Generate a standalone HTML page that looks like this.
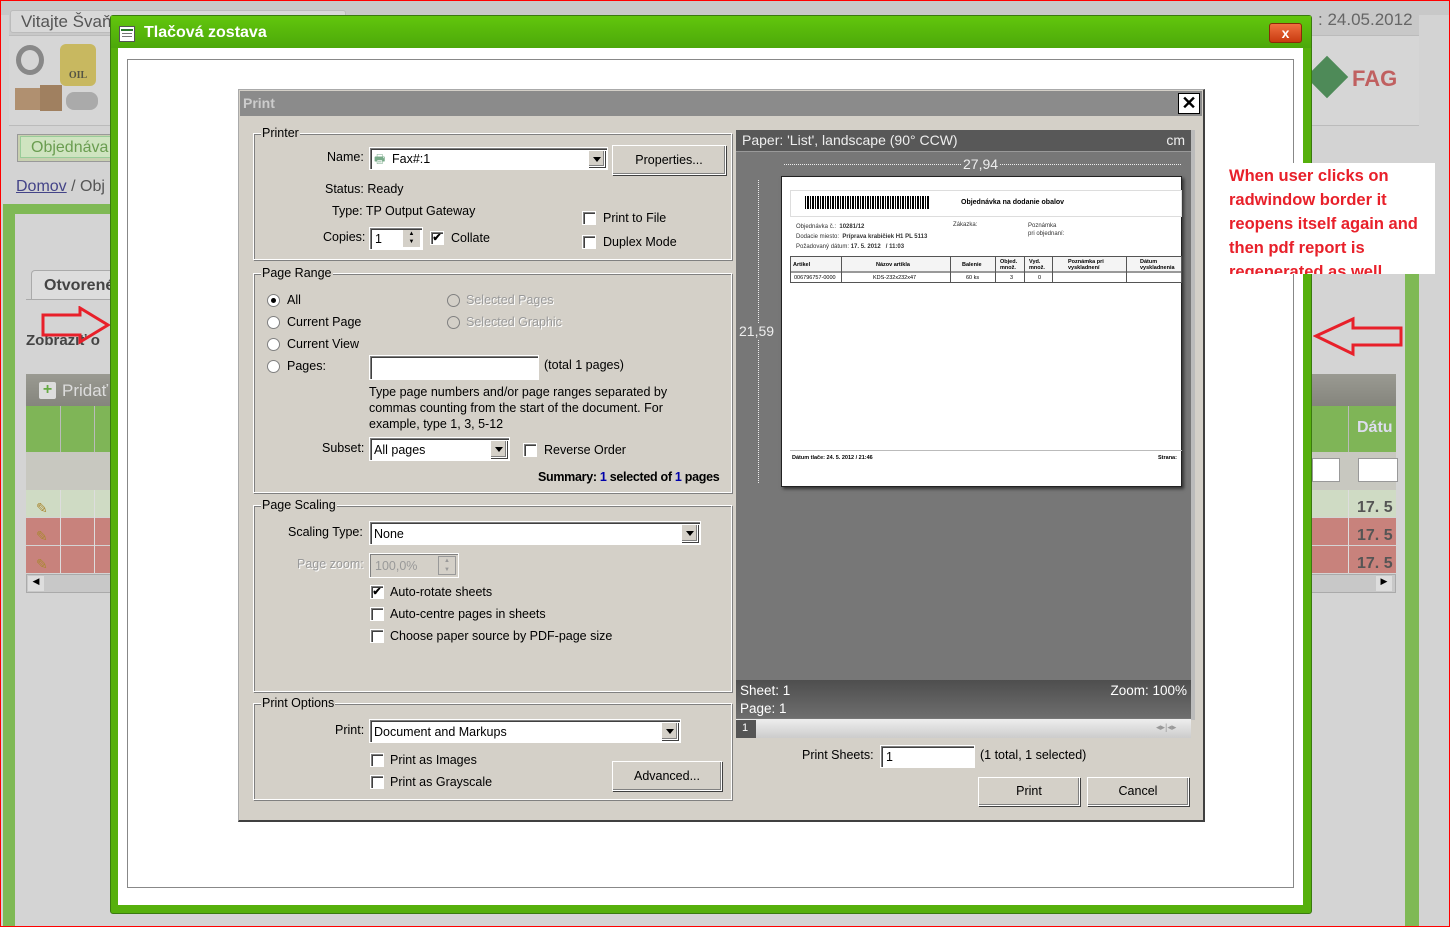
<!DOCTYPE html>
<html><head><meta charset="utf-8">
<style>
*{margin:0;padding:0;box-sizing:border-box}
body{width:1450px;height:927px;overflow:hidden;background:#d3d3d3;font-family:"Liberation Sans",sans-serif;position:relative}
.a{position:absolute}
.t{position:absolute;font-size:12.5px;color:#000;white-space:nowrap}
.fs{position:absolute;border:1px solid #fff;box-shadow:inset 1px 1px 0 #808080, 1px 1px 0 #808080}
.lg{position:absolute;top:-8px;left:7px;background:#d4d0c8;padding:0 1px;font-size:12.5px}
.in{position:absolute;background:#fff;border:1px solid #fff;box-shadow:inset 1px 1px 0 #808080,inset 2px 2px 0 #404040}
.cb{position:absolute;width:14px;height:14px;background:#fff;border:1px solid #fff;box-shadow:inset 1px 1px 0 #808080,inset 2px 2px 0 #404040;font-size:11px;line-height:13px;text-align:center;font-weight:bold}
.rb{position:absolute;width:13px;height:13px;border-radius:50%;background:#fff;border:1px solid #808080}
.rb.on::after{content:"";position:absolute;left:3px;top:3px;width:5px;height:5px;border-radius:50%;background:#000}
.dd{position:absolute;top:2px;right:2px;width:17px;bottom:2px;background:#d4d0c8;border:1px solid #fff;box-shadow:1px 1px 0 #404040,inset -1px -1px 0 #808080}
.dd::after{content:"";position:absolute;left:4px;top:6px;border:4px solid transparent;border-top:5px solid #000}
.btn{position:absolute;background:#d4d0c8;border:1px solid #fff;box-shadow:1px 1px 0 #404040,inset -1px -1px 0 #808080;font-size:12.5px;text-align:center}
</style></head><body>
<!-- background page -->
<div class="a" style="left:0;top:0;width:1450px;height:927px;border:1px solid #f00"></div>
<div class="a" style="left:1px;top:1px;width:1448px;height:14px;background:#c8c8c8"></div>
<div class="a" style="left:9px;top:8px;width:1410px;height:28px;background:#c8c8c8;border-bottom:1px solid #bbb"></div>
<div class="a" style="left:10px;top:10px;width:336px;height:23px;background:#d8d8d8;border:1px solid #bbb;border-radius:3px;font-size:17px;color:#555;padding:1px 10px">Vitajte Švaň</div>
<div class="a" style="left:1318px;top:10px;font-size:17px;color:#666">: 24.05.2012</div>
<div class="a" style="left:9px;top:36px;width:1410px;height:90px;background:#d6d6d6;border-bottom:1px solid #bbb"></div>
<div class="a" style="left:16px;top:45px;width:28px;height:30px;border:5px solid #888;border-radius:50%"></div>
<div class="a" style="left:60px;top:44px;width:36px;height:42px;background:#c8b860;border-radius:6px;font:bold 10px 'Liberation Serif';color:#554;text-align:center;padding-top:26px">OIL</div>
<div class="a" style="left:15px;top:88px;width:26px;height:22px;background:#b09070"></div>
<div class="a" style="left:40px;top:85px;width:22px;height:26px;background:#a08060"></div>
<div class="a" style="left:66px;top:92px;width:32px;height:18px;background:#aaa;border-radius:8px"></div>
<div class="a" style="left:1312px;top:62px;width:30px;height:30px;background:#4e8a58;transform:rotate(45deg);"></div>
<div class="a" style="left:1352px;top:66px;font:bold 22px 'Liberation Sans';color:#c06060">FAG</div>
<div class="a" style="left:17px;top:134px;width:100px;height:28px;background:#c8d0b0;border:1px solid #999"></div>
<div class="a" style="left:20px;top:136px;width:96px;height:22px;background:#cfe4c0;border:1px solid #9c9;font-size:16px;color:#6a9d50;padding:2px 10px">Objednáva</div>
<div class="a" style="left:16px;top:178px;font-size:16px;color:#555"><span style="color:#448;text-decoration:underline">Domov</span> / Obj</div>
<div class="a" style="left:3px;top:204px;width:1416px;height:10px;background:#7fb955"></div>
<div class="a" style="left:3px;top:204px;width:12px;height:722px;background:#7fb955"></div>
<div class="a" style="left:1405px;top:204px;width:14px;height:722px;background:#7fb955"></div>
<div class="a" style="left:15px;top:214px;width:1390px;height:712px;background:#d4d4d4"></div>
<div class="a" style="left:31px;top:270px;width:90px;height:30px;background:#ddd;border:1px solid #aaa;border-bottom:none;border-radius:4px 4px 0 0;font:bold 16px 'Liberation Sans';color:#444;padding:6px 12px">Otvorené</div>
<div class="a" style="left:26px;top:299px;width:90px;height:1px;background:#aaa"></div>
<div class="a" style="left:26px;top:332px;font:bold 15px 'Liberation Sans';color:#444">Zobraziť o</div>
<div class="a" style="left:1310px;top:258px;width:85px;height:1px;background:#aaa"></div>
<!-- grids -->
<div class="a" style="left:26px;top:374px;width:1370px;height:32px;background:linear-gradient(#9a9a92,#85857d)"></div>
<div class="a" style="left:39px;top:382px;width:17px;height:17px;background:#ddd;border-radius:2px;color:#6a4;font:bold 16px/16px 'Liberation Sans';text-align:center">+</div>
<div class="a" style="left:62px;top:381px;font-size:17px;color:#ddd">Pridať</div>
<div class="a" style="left:26px;top:406px;width:1370px;height:46px;background:#7fb557"></div>
<div class="a" style="left:60px;top:406px;width:1px;height:46px;background:#bbb"></div>
<div class="a" style="left:94px;top:406px;width:1px;height:46px;background:#bbb"></div>
<div class="a" style="left:1348px;top:406px;width:1px;height:46px;background:#bbb"></div>
<div class="a" style="left:1357px;top:419px;font:bold 16px 'Liberation Sans';color:#dde">Dátu</div>
<div class="a" style="left:26px;top:452px;width:1370px;height:38px;background:#c8c8c0"></div>
<div class="a" style="left:1312px;top:458px;width:28px;height:24px;background:#fff;border:1px solid #999"></div>
<div class="a" style="left:1358px;top:458px;width:40px;height:24px;background:#fff;border:1px solid #999"></div>
<div class="a" style="left:26px;top:490px;width:1370px;height:27px;background:#cfdbc4"></div>
<div class="a" style="left:26px;top:518px;width:1370px;height:27px;background:#c8827c"></div>
<div class="a" style="left:26px;top:546px;width:1370px;height:27px;background:#c8827c"></div>
<div class="a" style="left:60px;top:490px;width:1px;height:83px;background:#ddd"></div>
<div class="a" style="left:94px;top:490px;width:1px;height:83px;background:#ddd"></div>
<div class="a" style="left:1348px;top:490px;width:1px;height:83px;background:#ddd"></div>
<div class="a" style="left:1357px;top:494px;font:bold 16px 'Liberation Sans';color:#555;line-height:28px">17. 5<br>17. 5<br>17. 5</div>
<div class="a" style="left:36px;top:494px;font-size:14px;color:#a83;line-height:28px">✎<br>✎<br>✎</div>
<div class="a" style="left:26px;top:574px;width:1370px;height:19px;background:#c8c8c8;border:1px solid #aaa"></div>
<div class="a" style="left:28px;top:576px;width:16px;height:15px;background:#ddd;font-size:9px;text-align:center">◀</div>
<div class="a" style="left:1376px;top:576px;width:16px;height:15px;background:#ddd;font-size:9px;text-align:center">▶</div>
<!-- arrows -->
<svg class="a" style="left:40px;top:306px" width="72" height="40"><path d="M3 9 H40 V2 L68 19 L40 36 V29 H3 Z" fill="none" stroke="#e8202a" stroke-width="3"/></svg>
<svg class="a" style="left:1313px;top:315px" width="92" height="42"><path d="M3 21 L40 4 V13 H88 V30 H40 V39 Z" fill="none" stroke="#e8202a" stroke-width="3"/></svg>
<!-- radwindow -->
<div class="a" style="left:110px;top:15px;width:1202px;height:899px;background:#56b00c;border:1px solid #3a7a10;border-radius:3px"></div>
<div class="a" style="left:111px;top:16px;width:1200px;height:32px;background:linear-gradient(#62c60c,#4ca80a)"></div>
<div class="a" style="left:119px;top:26px;width:16px;height:16px;background:#fff;border:1px solid #555"><div style="margin:2px 1px;height:2px;background:#2a7a2a"></div><div style="margin:2px 2px;height:1px;background:#777"></div><div style="margin:2px 2px;height:1px;background:#777"></div></div>
<div class="a" style="left:144px;top:24px;font:bold 16px 'Liberation Sans';color:#fff">Tlačová zostava</div>
<div class="a" style="left:1269px;top:23px;width:33px;height:20px;background:linear-gradient(#f07040,#c83a10);border:1px solid #8a2a08;border-radius:3px;color:#fff;font:bold 14px/18px 'Liberation Sans';text-align:center">x</div>
<div class="a" style="left:118px;top:48px;width:1185px;height:857px;background:#fff"></div>
<div class="a" style="left:127px;top:59px;width:1167px;height:829px;border:1px solid #888"></div>
<!-- annotation (above window) -->
<div class="a" style="left:1222px;top:163px;width:213px;height:111px;background:#fff;overflow:hidden;font:bold 16.5px/24px 'Liberation Sans',sans-serif;color:#e8202a;padding:1px 0 0 7px;white-space:nowrap">When user clicks on<br>radwindow border it<br>reopens itself again and<br>then pdf report is<br>regenerated as well</div>
<!-- print dialog -->
<div class="a" style="left:238px;top:89px;width:967px;height:733px;background:#d4d0c8;border:1px solid #aaa;border-right:2px solid #404040;border-bottom:2px solid #404040"></div>
<div class="a" style="left:240px;top:91px;width:962px;height:25px;background:#8b8b8b;font:bold 14px 'Liberation Sans';color:#ccc;padding:4px 3px">Print</div>
<div class="a" style="left:1178px;top:93px;width:22px;height:21px;background:#fff;border:1px solid #000;font:bold 18px/18px 'Liberation Sans';text-align:center">✕</div>

<div class="fs" style="left:253px;top:133px;width:479px;height:127px"><span class="lg">Printer</span></div>
<div class="t" style="left:327px;top:150px">Name:</div>
<div class="in" style="left:369px;top:147px;width:239px;height:23px"><span style="position:absolute;left:4px;top:2px;font-size:12px;color:#7a8">🖶</span><span class="t" style="left:22px;top:4px">Fax#:1</span><div class="dd"></div></div>
<div class="btn" style="left:612px;top:145px;width:114px;height:30px;line-height:28px">Properties...</div>
<div class="t" style="left:325px;top:182px">Status: Ready</div>
<div class="t" style="left:332px;top:204px">Type: TP Output Gateway</div>
<div class="t" style="left:323px;top:230px">Copies:</div>
<div class="in" style="left:369px;top:227px;width:54px;height:23px"><span class="t" style="left:5px;top:4px">1</span><div style="position:absolute;right:2px;top:2px;width:17px;height:17px;background:#d4d0c8;font-size:6px;line-height:8px;text-align:center">▲<br>▼</div></div>
<div class="cb" style="left:430px;top:231px">✔</div><div class="t" style="left:451px;top:231px">Collate</div>
<div class="cb" style="left:582px;top:211px"></div><div class="t" style="left:603px;top:211px">Print to File</div>
<div class="cb" style="left:582px;top:235px"></div><div class="t" style="left:603px;top:235px">Duplex Mode</div>

<div class="fs" style="left:253px;top:273px;width:479px;height:220px"><span class="lg">Page Range</span></div>
<div class="rb on" style="left:267px;top:294px"></div><div class="t" style="left:287px;top:293px">All</div>
<div class="rb" style="left:267px;top:316px"></div><div class="t" style="left:287px;top:315px">Current Page</div>
<div class="rb" style="left:267px;top:338px"></div><div class="t" style="left:287px;top:337px">Current View</div>
<div class="rb" style="left:267px;top:360px"></div><div class="t" style="left:287px;top:359px">Pages:</div>
<div class="rb" style="left:447px;top:294px;background:#d4d0c8"></div><div class="t" style="left:466px;top:293px;color:#999;text-shadow:1px 1px 0 #fff">Selected Pages</div>
<div class="rb" style="left:447px;top:316px;background:#d4d0c8"></div><div class="t" style="left:466px;top:315px;color:#999;text-shadow:1px 1px 0 #fff">Selected Graphic</div>
<div class="in" style="left:369px;top:355px;width:170px;height:25px"></div>
<div class="t" style="left:544px;top:358px">(total 1 pages)</div>
<div class="t" style="left:369px;top:384px;line-height:16px">Type page numbers and/or page ranges separated by<br>commas counting from the start of the document. For<br>example, type 1, 3, 5-12</div>
<div class="t" style="left:322px;top:441px">Subset:</div>
<div class="in" style="left:369px;top:437px;width:141px;height:24px"><span class="t" style="left:4px;top:5px">All pages</span><div class="dd"></div></div>
<div class="cb" style="left:523px;top:443px"></div><div class="t" style="left:544px;top:443px">Reverse Order</div>
<div class="t" style="left:538px;top:470px;font-weight:bold;letter-spacing:-0.3px">Summary: <span style="color:#00a">1</span> selected of <span style="color:#00a">1</span> pages</div>

<div class="fs" style="left:253px;top:505px;width:479px;height:187px"><span class="lg">Page Scaling</span></div>
<div class="t" style="left:288px;top:525px">Scaling Type:</div>
<div class="in" style="left:369px;top:521px;width:332px;height:24px"><span class="t" style="left:4px;top:5px">None</span><div class="dd"></div></div>
<div class="t" style="left:297px;top:557px;color:#999;text-shadow:1px 1px 0 #fff">Page zoom:</div>
<div class="a" style="left:369px;top:553px;width:90px;height:25px;border:1px solid #fff;box-shadow:inset 1px 1px 0 #808080"><span class="t" style="left:5px;top:5px;color:#999">100,0%</span><div style="position:absolute;right:2px;top:2px;width:18px;height:19px;background:#d4d0c8;border:1px solid #999;font-size:6px;line-height:9px;text-align:center;color:#999">▲<br>▼</div></div>
<div class="cb" style="left:370px;top:585px">✔</div><div class="t" style="left:390px;top:585px">Auto-rotate sheets</div>
<div class="cb" style="left:370px;top:607px"></div><div class="t" style="left:390px;top:607px">Auto-centre pages in sheets</div>
<div class="cb" style="left:370px;top:629px"></div><div class="t" style="left:390px;top:629px">Choose paper source by PDF-page size</div>

<div class="fs" style="left:253px;top:703px;width:479px;height:97px"><span class="lg">Print Options</span></div>
<div class="t" style="left:335px;top:723px">Print:</div>
<div class="in" style="left:369px;top:719px;width:312px;height:24px"><span class="t" style="left:4px;top:5px">Document and Markups</span><div class="dd"></div></div>
<div class="cb" style="left:370px;top:753px"></div><div class="t" style="left:390px;top:753px">Print as Images</div>
<div class="cb" style="left:370px;top:775px"></div><div class="t" style="left:390px;top:775px">Print as Grayscale</div>
<div class="btn" style="left:612px;top:761px;width:110px;height:30px;line-height:28px">Advanced...</div>

<!-- preview -->
<div class="a" style="left:736px;top:130px;width:455px;height:590px;background:#777"></div>
<div class="a" style="left:736px;top:130px;width:455px;height:22px;background:#585858;border-bottom:1px solid #999;color:#eee;font-size:14px;padding:2px 6px">Paper: 'List', landscape (90° CCW)<span style="position:absolute;right:6px">cm</span></div>
<div class="a" style="left:1191px;top:130px;width:4px;height:590px;background:#bbb"></div>
<div class="a" style="left:784px;top:164px;width:397px;border-top:1px dotted #eee"></div>
<div class="a" style="left:961px;top:156px;background:#777;color:#eee;font-size:14px;padding:0 2px">27,94</div>
<div class="a" style="left:758px;top:180px;height:303px;border-left:1px dotted #eee"></div>
<div class="a" style="left:739px;top:323px;background:#777;color:#eee;font-size:14px">21,59</div>
<div class="a" style="left:781px;top:176px;width:401px;height:311px;background:#fff;border:1px solid #222;box-shadow:2px 2px 3px #333"></div>
<div class="a" style="left:790px;top:190px;width:392px;height:27px;border:1px solid #ddd"></div>
<div class="a" style="left:805px;top:196px;width:124px;height:13px;background:repeating-linear-gradient(90deg,#000 0 1px,#fff 1px 2px,#000 2px 4px,#fff 4px 5px)"></div>
<div class="a" style="left:961px;top:199px;font:bold 7px 'Liberation Sans'">Objednávka na dodanie obalov</div>
<div class="a" style="left:796px;top:222px;font:6px/10px 'Liberation Sans';color:#333">Objednávka č.: &nbsp;<b>10281/12</b><br>Dodacie miesto: &nbsp;<b>Príprava krabičiek H1 PL 5113</b><br>Požadovaný dátum: <b>17. 5. 2012 &nbsp; / 11:03</b></div>
<div class="a" style="left:953px;top:222px;font:6px 'Liberation Sans';color:#333">Zákazka:</div>
<div class="a" style="left:1028px;top:222px;font:6px/8px 'Liberation Sans';color:#333">Poznámka<br>pri objednaní:</div>
<div class="a" style="left:790px;top:256px;width:392px;height:27px;border:1px solid #555;font:bold 5.5px 'Liberation Sans'">
<div style="height:16px;border-bottom:2px solid #999;background:#f4f4f4"></div></div>
<div class="a" style="left:793px;top:262px;font:bold 5.5px 'Liberation Sans'">Artikel</div>
<div class="a" style="left:876px;top:262px;font:bold 5.5px 'Liberation Sans'">Názov artikla</div>
<div class="a" style="left:962px;top:262px;font:bold 5.5px 'Liberation Sans'">Balenie</div>
<div class="a" style="left:1000px;top:259px;font:bold 5.5px 'Liberation Sans'">Objed.<br>množ.</div>
<div class="a" style="left:1029px;top:259px;font:bold 5.5px 'Liberation Sans'">Vyd.<br>množ.</div>
<div class="a" style="left:1068px;top:259px;font:bold 5.5px 'Liberation Sans'">Poznámka pri<br>vyskladnení</div>
<div class="a" style="left:1140px;top:259px;font:bold 5.5px 'Liberation Sans'">Dátum<br>vyskladnenia</div>
<div class="a" style="left:794px;top:275px;font:5.5px 'Liberation Sans'">006796757-0000</div>
<div class="a" style="left:873px;top:275px;font:5.5px 'Liberation Sans'">KDS-232x232x47</div>
<div class="a" style="left:966px;top:275px;font:5.5px 'Liberation Sans'">60 ks</div>
<div class="a" style="left:1010px;top:275px;font:5.5px 'Liberation Sans'">3</div>
<div class="a" style="left:1038px;top:275px;font:5.5px 'Liberation Sans'">0</div>
<div class="a" style="left:841px;top:256px;width:1px;height:27px;background:#555"></div>
<div class="a" style="left:950px;top:256px;width:1px;height:27px;background:#555"></div>
<div class="a" style="left:995px;top:256px;width:1px;height:27px;background:#555"></div>
<div class="a" style="left:1024px;top:256px;width:1px;height:27px;background:#555"></div>
<div class="a" style="left:1052px;top:256px;width:1px;height:27px;background:#555"></div>
<div class="a" style="left:1126px;top:256px;width:1px;height:27px;background:#555"></div>
<div class="a" style="left:790px;top:450px;width:392px;height:1px;background:#bbb"></div>
<div class="a" style="left:792px;top:455px;font:bold 5.5px 'Liberation Sans'">Dátum tlače: 24. 5. 2012 / 21:46</div>
<div class="a" style="left:1158px;top:455px;font:bold 5.5px 'Liberation Sans'">Strana:</div>
<div class="a" style="left:736px;top:680px;width:455px;height:38px;background:linear-gradient(#4e4e4e,#6e6e6e);color:#fff;font-size:13.5px;line-height:18px;padding:2px 4px">Sheet: 1<br>Page: 1<span style="position:absolute;right:4px;top:2px">Zoom: 100%</span></div>
<div class="a" style="left:736px;top:719px;width:455px;height:19px;background:linear-gradient(#eee,#ccc)"></div>
<div class="a" style="left:736px;top:720px;width:20px;height:18px;background:#555;color:#fff;font-size:11px;padding:2px 6px">1</div>
<div class="a" style="left:1156px;top:722px;font-size:9px;color:#999">◂▸|◂▸</div>
<div class="t" style="left:802px;top:748px">Print Sheets:</div>
<div class="in" style="left:880px;top:745px;width:95px;height:23px"><span class="t" style="left:5px;top:4px">1</span></div>
<div class="t" style="left:980px;top:748px">(1 total, 1 selected)</div>
<div class="btn" style="left:978px;top:777px;width:102px;height:29px;line-height:27px">Print</div>
<div class="btn" style="left:1087px;top:777px;width:102px;height:29px;line-height:27px">Cancel</div>
</body></html>
